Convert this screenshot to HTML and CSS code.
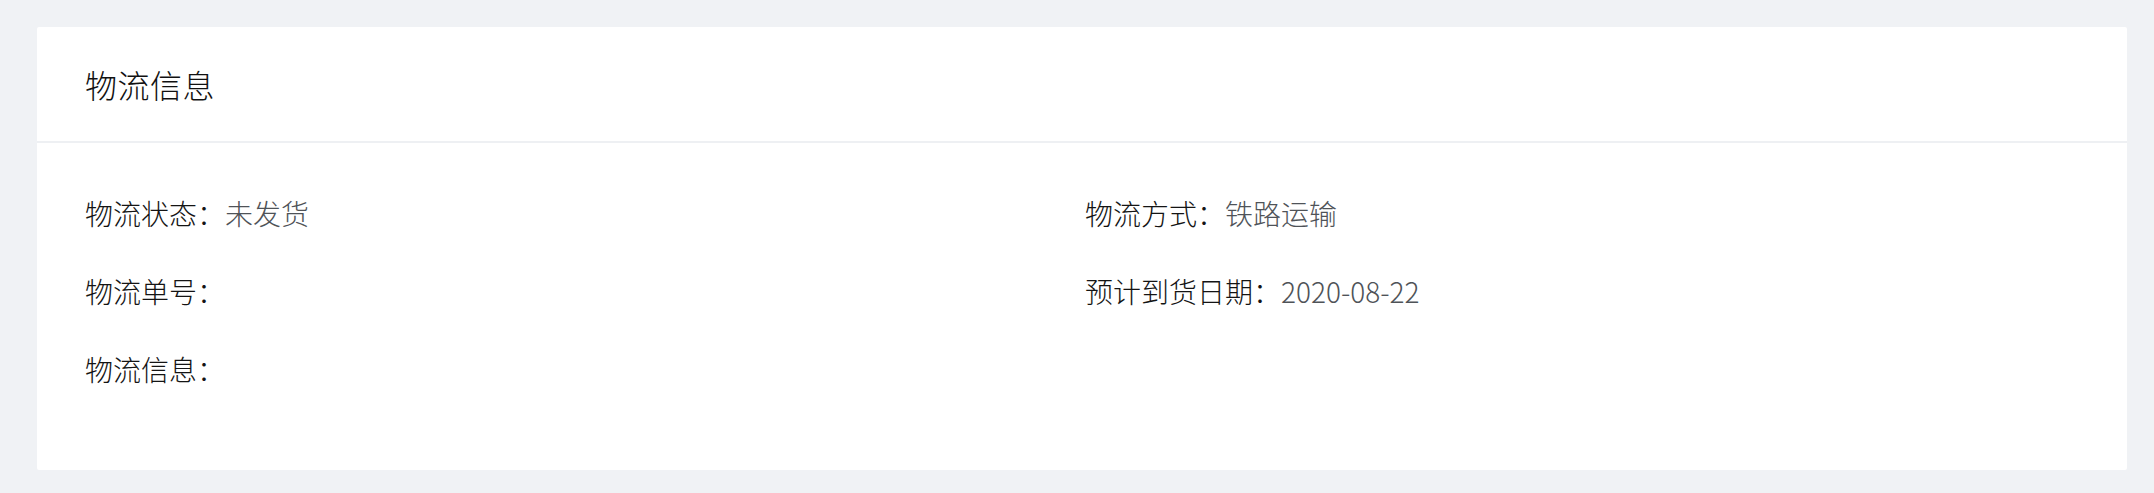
FILE: index.html
```html
<!DOCTYPE html>
<html lang="zh-CN">
<head>
<meta charset="utf-8">
<title>物流信息</title>
<link rel="stylesheet" href="styles.css">
</head>
<body>
<div class="page">
  <section class="card">
    <header class="card-header">物流信息</header>
    <div class="card-body">
      <div class="item"><span class="label">物流状态：</span><span class="value">未发货</span></div>
      <div class="item"><span class="label">物流方式：</span><span class="value">铁路运输</span></div>
      <div class="item"><span class="label">物流单号：</span><span class="value"></span></div>
      <div class="item"><span class="label">预计到货日期：</span><span class="value">2020-08-22</span></div>
      <div class="item"><span class="label">物流信息：</span><span class="value"></span></div>
    </div>
  </section>
</div>
</body>
</html>
```
FILE: styles.css
```css
html, body {
  margin: 0;
  padding: 0;
  background: #f0f2f5;
}
body {
  font-family: "Noto Sans CJK SC", "Noto Sans", sans-serif;
  color: #303133;
}
.page {
  padding: 27px 27px 22px 37px;
}
.card {
  background: #ffffff;
  border-radius: 2px;
}
.card-header {
  height: 116px;
  box-sizing: border-box;
  border-bottom: 2px solid #eef0f3;
  padding: 0 48px;
  display: flex;
  align-items: center;
  font-size: 32px;
  font-weight: 300;
  color: #111111;
  letter-spacing: 0.5px;
}
.card-body {
  display: grid;
  grid-template-columns: 1000px 1fr;
  padding: 31px 48px 62px 48px;
}
.item {
  height: 78px;
  display: flex;
  align-items: center;
  font-size: 28px;
  font-weight: 300;
}
.label {
  color: #141414;
}
.value {
  color: #4f5358;
}
```
